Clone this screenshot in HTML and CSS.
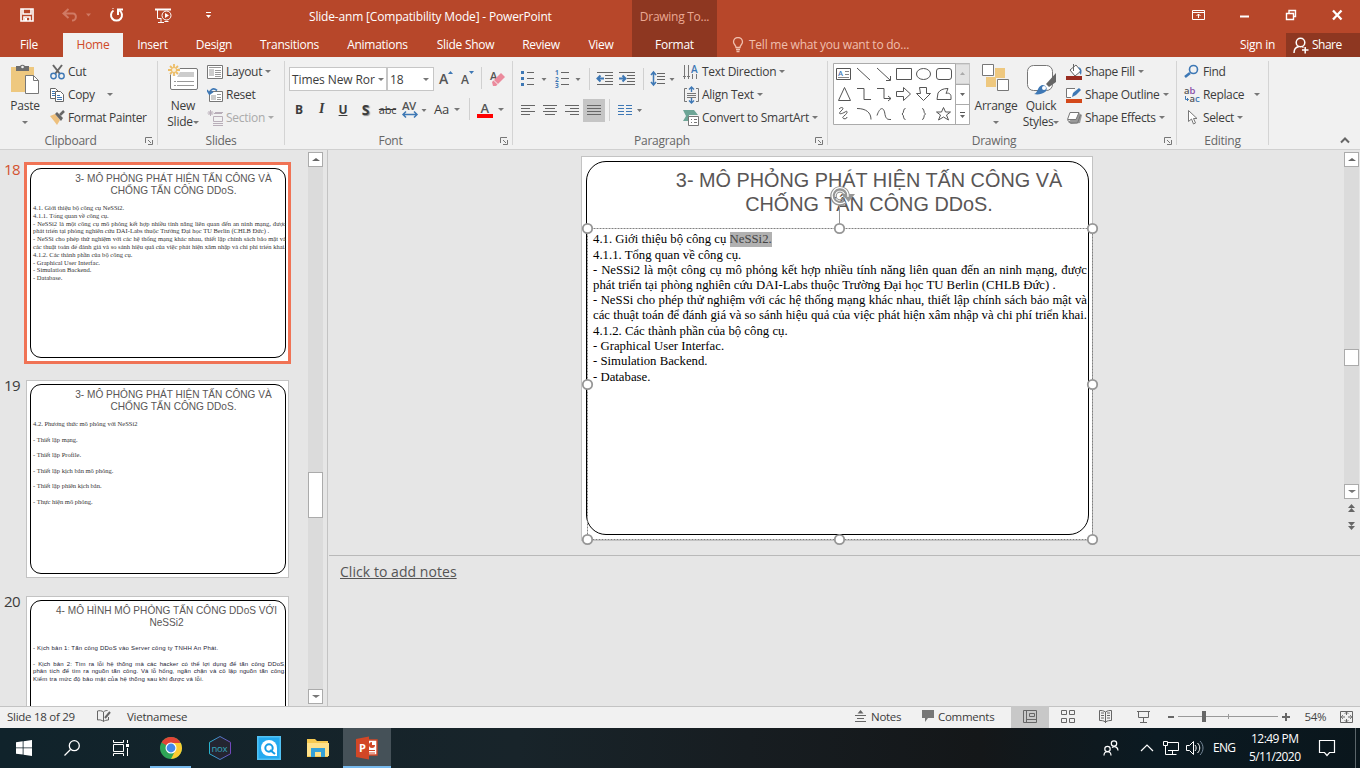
FILE: index.html
```html
<!DOCTYPE html>
<html lang="en">
<head>
<meta charset="utf-8">
<title>Slide-anm [Compatibility Mode] - PowerPoint</title>
<link rel="stylesheet" href="styles.css">
</head>
<body>
<div class="app">
  <header class="titlebar">
    <div class="quick">
      <svg width="230" height="33" viewBox="0 0 230 33" fill="none" stroke="#fff">
        <path d="M21 9h12v12H21zM23 9v5h8V9M24 21v-4h6v4" stroke-width="1.6"/><path d="M26 18v3" stroke-width="2"/>
        <g stroke="#d07a64" stroke-width="2"><path d="M64 13.500h9c4 0 4 7-1 7M68.500 9l-5 4.500 5 4.500"/></g><path d="M86 13.500h5l-2.500 3z" fill="#d07a64" stroke="none"/>
        <path d="M113.500 10.500a5.500 5.500 0 1 0 6 0M113 9v-.5M117 9.500h6M118 9v6" stroke-width="2"/>
        <path d="M155 9.500h16" stroke-width="2"/><path d="M157.500 10v8.500h4M158 22.500h6M161 19v3M164.500 21.500h4"/><circle cx="166.500" cy="15.500" r="4.500"/><path d="M165 13v5l4-2.500z" fill="#fff" stroke="none"/>
        <path d="M206 12.500h5"/><path d="M206 15h5l-2.500 3z" fill="#fff" stroke="none"/>
      </svg>
    </div>
    <div class="doc-title">Slide-anm [Compatibility Mode] - PowerPoint</div>
    <div class="ctx-title">Drawing To...</div>
    <div class="window-buttons">
      <svg width="180" height="33" viewBox="0 0 180 33" fill="none" stroke="#fff">
        <path d="M12.500 10.500h12v9h-12zM12 12.500h13M18.500 18v-4M16.500 16l2-2 2 2"/><path d="M60 16.500h9" stroke-width="2"/>
        <path d="M106.500 13.500h7v6h-7zM109 13v-2.500h6.500v6H114" stroke-width="1.400"/><path d="M153 10.500l8.500 9m0-9l-8.500 9" stroke-width="2.300"/>
      </svg>
    </div>
  </header>
  <nav class="tabs">
    <span class="tab file">File</span><span class="tab active">Home</span><span class="tab">Insert</span><span class="tab">Design</span><span class="tab">Transitions</span><span class="tab">Animations</span><span class="tab">Slide Show</span><span class="tab">Review</span><span class="tab">View</span><span class="tab ctx">Format</span>
    <span class="tell"><svg width="12" height="16" viewBox="0 0 12 16" fill="none" stroke="#f0bfae" stroke-width="1.300"><path d="M4 10.500C4 8 1.500 7.500 1.500 5a4.500 4.500 0 0 1 9 0C10.500 7.500 8 8 8 10.500zM4 12.500h4M4.500 14.500h3"/></svg>Tell me what you want to do...</span>
    <span class="signin">Sign in</span>
    <span class="share"><svg width="16" height="17" viewBox="0 0 16 17" fill="none" stroke="#fff" stroke-width="1.500"><circle cx="7.500" cy="5.500" r="4.300"/><path d="M1 16c0-3.500 2-6 5-6.500M9 9.500l1.500 1M9 13h6.500M12.200 10v6.500"/></svg>Share</span>
  </nav>

  <section class="ribbon">
    <div class="group clipboard">
      <div class="big">
        <svg width="30" height="32" viewBox="0 0 30 32"><path d="M1 4h23v25H1z" fill="#eec87f"/><path d="M6 3h4a3 3 0 0 1 5 0h4v5H6z" fill="#6d6d6d"/><circle cx="12.500" cy="4" r="1.300" fill="#f1f1f1"/><path d="M15.500 12.500h8l5 5v13h-13z" fill="#fff" stroke="#777"/><path d="M23.500 12.500v5h5" fill="none" stroke="#777"/></svg>
        <b>Paste</b><b><i class="dn"></i></b>
      </div>
      <div class="rows">
        <div><svg width="17" height="18" viewBox="0 0 17 18" fill="none"><path d="M4 2l7 9M13 2L6 11" stroke="#666" stroke-width="2"/><circle cx="4.500" cy="13" r="2.700" stroke="#3e78b5" stroke-width="1.400"/><circle cx="12.500" cy="13" r="2.700" stroke="#3e78b5" stroke-width="1.400"/></svg>Cut</div>
        <div><svg width="17" height="18" viewBox="0 0 17 18" fill="#fff" stroke="#666"><path d="M1.500 2.500h5l3 3v7h-8z"/><path d="M3 5.500h3M3 7.500h4M3 9.500h3" stroke="#3e78b5"/><path d="M6.500 5.500h5l3 3v7h-8z"/><path d="M8 9.500h3M8 11.500h5M8 13.500h5" stroke="#3e78b5"/></svg>Copy<i class="dn far"></i></div>
        <div><svg width="17" height="18" viewBox="0 0 17 18"><path d="M1 7l5-2 5 6-3 5-3-4z" fill="#eec07d"/><path d="M6 5l2-2 6 6-2 3z" fill="#666"/><path d="M11 6l4-4" stroke="#666" stroke-width="2.500"/></svg>Format Painter</div>
      </div>
      <footer>Clipboard</footer><svg class="launch" viewBox="0 0 8 8"><path d="M.5 6V.5H7M3 3l3 3M7.500 3v4.500H3" fill="none" stroke="#777"/></svg>
    </div>

    <div class="group slides">
      <div class="big">
        <svg width="32" height="32" viewBox="0 0 32 32"><rect x="3.500" y="5.500" width="27" height="21" rx="1.500" fill="#fff" stroke="#777"/><path d="M13 9h14v5H10z" fill="#ccc"/><path d="M7 18.500h20M7 22.500h20" stroke="#999" stroke-dasharray="2 1 17 0"/><path d="M7 1v12M1 7h12M3 3l8 8M11 3l-8 8" stroke="#f1f1f1" stroke-width="3.500"/><path d="M7 1v12M1 7h12M3 3l8 8M11 3l-8 8" stroke="#edbd66" stroke-width="1.800"/><circle cx="7" cy="7" r="2" fill="#f8efdc"/></svg>
        <b>New</b><b>Slide<i class="dn"></i></b>
      </div>
      <div class="rows">
        <div><svg width="17" height="18" viewBox="0 0 17 18"><path d="M.5 2.500h15v13H.5z" fill="#fff" stroke="#777"/><path d="M2 4.500h12M8 7.500h6M8 9.500h6M8 11.500h6M8 13.500h6" stroke="#999"/><path d="M2 6h5v7H2z" fill="#ccc"/></svg>Layout<i class="dn"></i></div>
        <div><svg width="17" height="18" viewBox="0 0 17 18"><path d="M2.500 5.500h13v10h-13z" fill="#fff" stroke="#777"/><path d="M4 9h5v5H4z" fill="#ccc"/><path d="M10 8.500h4M10 11.500h4M10 13.500h4" stroke="#999"/><path d="M10 4.500C6 1 3 4 2.500 7.500M0 4l2.500 4L6 5.500" fill="none" stroke="#3e78b5" stroke-width="1.700"/></svg>Reset</div>
        <div class="off"><svg width="17" height="18" viewBox="0 0 17 18" fill="none" stroke="#b9aeb9"><path d="M3.500 1v6M.5 4h6M1.500 2l4 4M5.500 2l-4 4M7 4.500h8M6.500 7.500h9v5h-9zM6 14.500h10" /><path d="M8 3.500h8M6 16.500h10"/></svg>Section<i class="dn"></i></div>
      </div>
      <footer>Slides</footer>
    </div>

    <div class="group font">
      <div class="tools">
        <div class="r1">
          <div class="combo">Times New Ror<i class="dn"></i></div><div class="combo">18<i class="dn"></i></div>
          <svg width="22" height="24" viewBox="0 0 22 24"><text x="4" y="17" class="ga" font-size="14">A</text><path d="M13 7l2.500-3L18 7z" fill="#3e78b5"/></svg>
          <svg width="22" height="24" viewBox="0 0 22 24"><text x="4" y="17" class="ga" font-size="12">A</text><path d="M12 4h5l-2.500 3z" fill="#3e78b5"/></svg>
          <i class="sep"></i>
          <svg width="24" height="24" viewBox="0 0 24 24"><text x="6" y="13" class="ga" font-size="11">A</text><path d="M10 13l7-7 4 4-7 7z" fill="#eb8a9c"/><path d="M8 15l1.500-1.500 4 4L12 19H9z" fill="#eb8a9c"/></svg>
        </div>
        <div class="r2">
          <b class="g">B</b><em class="g">I</em><b class="g un">U</b><b class="g sh">S</b><span class="g strike">abc</span>
          <svg width="32" height="24" viewBox="0 0 32 24"><text x="4" y="12" class="ga" font-size="11.500" letter-spacing="-.5">AV</text><path d="M5 16.500h14M8 13.500l-3 3 3 3M16 13.500l3 3-3 3" fill="none" stroke="#3e78b5" stroke-width="1.500"/><path d="M23.500 11h5L26 14z" fill="#777"/></svg>
          <span class="g aa">Aa<i class="dn"></i></span><i class="sep"></i>
          <svg width="21" height="24" viewBox="0 0 21 24"><text x="6.500" y="15" class="ga" font-size="13">A</text><path d="M3 16h16v4H3z" fill="red"/></svg><span class="g last"><i class="dn"></i></span>
        </div>
      </div>
      <footer>Font</footer><svg class="launch" viewBox="0 0 8 8"><path d="M.5 6V.5H7M3 3l3 3M7.500 3v4.500H3" fill="none" stroke="#777"/></svg>
    </div>

    <div class="group para">
      <div class="tools">
        <svg width="166" height="62" viewBox="517 61 166 62" fill="none" stroke="#666" shape-rendering="crispEdges">
          <path d="M527 72.500h7M527 78.500h7M527 84.500h7M561 72.500h8M561 78.500h8M561 84.500h8"/>
          <g fill="#3e78b5" stroke="none"><rect x="521" y="71" width="3" height="3"/><rect x="521" y="77" width="3" height="3"/><rect x="521" y="83" width="3" height="3"/></g>
          <g fill="#3e78b5" stroke="none" font-size="6.500" font-weight="700" font-family="Noto Sans"><text x="555" y="75">1</text><text x="555" y="81.500">2</text><text x="555" y="88">3</text></g>
          <path d="M589.500 68v22M643.500 68v22M609.500 99v22" stroke="#d0d0d0"/>
          <path d="M597 72.500h16M605 75.500h8M605 78.500h8M605 81.500h8M597 84.500h16M619 72.500h16M627 75.500h8M627 78.500h8M627 81.500h8M619 84.500h16"/>
          <g stroke="#3e78b5" stroke-width="2" shape-rendering="auto"><path d="M598 78.500h6M600.500 75.500l-3 3 3 3M619 78.500h6M622.500 75.500l3 3-3 3"/><path d="M653.500 72v13M651 75l2.500-3 2.500 3M651 82l2.500 3 2.500-3" stroke-width="1.500"/></g>
          <path d="M657 73.500h8M657 76.500h8M657 79.500h8M657 83.500h8"/>
          <rect x="583" y="99" width="22" height="23" fill="#c5c5c5" stroke="none"/>
          <path d="M521 105.500h14M521 108.500h9M521 111.500h14M521 114.500h9M543 105.500h14M545 108.500h10M543 111.500h14M545 114.500h10M565 105.500h14M570 108.500h9M565 111.500h14M570 114.500h9M587 105.500h14M587 108.500h14M587 111.500h14M587 114.500h14"/>
          <path d="M618 105.500h6M618 108.500h6M618 111.500h6M618 114.500h6M626 105.500h6M626 108.500h6M626 111.500h6M626 114.500h6" stroke="#3e78b5"/>
          <g fill="#777" stroke="none" shape-rendering="auto"><path d="M541.500 78h5l-2.500 3zM575.500 78h5l-2.500 3zM669.500 78h5l-2.500 3zM637 109h5l-2.500 3z"/></g>
        </svg>
      </div>
      <div class="rows">
        <div><svg width="19" height="18" viewBox="0 0 19 18"><path d="M1.500 2v14M5.500 2v14M9.500 11v5M13.500 11v5M0 13.500h3M4 13.500h3" stroke="#777" fill="none"/><text x="8" y="10" font-size="10" class="ga blue">A</text></svg>Text Direction<i class="dn"></i></div>
        <div><svg width="19" height="18" viewBox="0 0 19 18" fill="none" stroke="#777"><path d="M4 2.500H1.500v13H4M13 2.500h2.500v13H13M4 7.500h9M4 9.500h9M4 11.500h9"/><path d="M8.500 1v5M6 3.500L8.500 1 11 3.500M8.500 17v-5M6 14.500L8.500 17l2.500-2.500" stroke="#3e78b5" stroke-width="1.400"/></svg>Align Text<i class="dn"></i></div>
        <div><svg width="19" height="18" viewBox="0 0 19 18"><path d="M0 1h11l4 5H6v6H0l3-5z" fill="#6da596"/><path d="M5.500 7.500h10v9h-10z" fill="#fff" stroke="#777"/><path d="M8 10.500h1M11 10.500h3M8 13.500h1M11 13.500h3" stroke="#777"/></svg>Convert to SmartArt<i class="dn"></i></div>
      </div>
      <footer>Paragraph</footer><svg class="launch" viewBox="0 0 8 8"><path d="M.5 6V.5H7M3 3l3 3M7.500 3v4.500H3" fill="none" stroke="#777"/></svg>
    </div>

    <div class="group drawing">
      <svg class="gallery" width="138" height="63" viewBox="833 63 138 63" fill="none" stroke="#555">
        <path d="M833.500 63.500h136v61h-136z" fill="#fff" stroke="#ababab"/><path d="M955.500 64h14v20h-14z" fill="#e3e3e3" stroke="#c6c6c6"/><path d="M955.500 64v60M955.500 84.500h14M955.500 104.500h14" stroke="#ababab"/>
        <path d="M960 75h5l-2.500-3z" fill="#aaa" stroke="none"/><path d="M960 93h5l-2.500 3zM960 115h5l-2.500 3z" fill="#666" stroke="none"/><path d="M960 112.500h5"/>
        <path d="M836.500 68.500h14v11h-14z"/><path d="M845 71.500h4M845 74.500h4M838 77.500h11" stroke="#888"/><text x="838" y="76" font-size="7.500" class="ga blue">A</text>
        <path d="M857 68l13 12M877 68l13 12M890.500 76v4.500H886M896.500 68.500h15v11h-15z"/><ellipse cx="923.500" cy="74" rx="7" ry="5.500"/><rect x="936.500" y="68.500" width="15" height="11" rx="2.500"/>
        <path d="M844.500 87.500l6 13h-12zM857 88.500h7v11h7M877 88.500h7v10h7M888 96l3 2.500-3 2.500M896.500 91.500h7v-4l7 6.500-7 6.500v-4h-7zM919.500 87.500h7v6h4l-7 7-7-7h4zM938 93c2-3 5-4.500 10-4.500l-2 5c2-1 5 0 5 3v3h-14z"/>
        <path d="M839 109c3-3 6-1 2 2-4 4 1 3 4 1s3 1-1 4 3 4 3 1M857 108.500c9 0 14 4 14 11M877 115.500c3-9 7-9 8-1 1 5 3 5 6 5M905.500 108.500c-3 0-1 4.500-3.500 5.500 2.500 1 .5 5.500 3.500 5.500M922 108.500c3 0 1 4.500 3.500 5.500-2.500 1-.5 5.500-3.500 5.500M943.500 107.500l2 4.500h5l-4 3 2 5-5-3-5 3 2-5-4-3h5z"/>
      </svg>
      <div class="big arrange"><svg width="28" height="32" viewBox="0 0 28 32"><path d="M13 5h10v10H13zM4 14h10v10H4z" fill="#eec87f"/><path d="M.500 1.500h11v11H.500zM15.500 16.500h11v11h-11z" fill="#fff" stroke="#777"/></svg><b>Arrange</b><b><i class="dn"></i></b></div>
      <div class="big quickst"><svg width="32" height="32" viewBox="0 0 32 32"><rect x="2.500" y="2.500" width="25" height="25" rx="6" fill="#fff" stroke="#777"/><path d="M9 31c4-1 3-7 8-9 5 0 6 5 3 7s-7 3-11 2z" fill="#3e78b5"/><circle cx="19" cy="25" r="2" fill="#fff"/><path d="M21 21l10-11v9l-7 5z" fill="#666"/></svg><b>Quick</b><b>Styles<i class="dn"></i></b></div>
      <div class="rows">
        <div><svg width="17" height="18" viewBox="0 0 17 18"><path d="M4 7l6-5 5 6-6 5z" fill="#fff" stroke="#666"/><path d="M7.500 1v7" stroke="#666"/><path d="M12 4c4 1 4 4 3 8-1-1-2-3-1-5z" fill="#3e78b5"/><path d="M0 13h16v4H0z" fill="#992c20"/></svg>Shape Fill<i class="dn"></i></div>
        <div><svg width="17" height="18" viewBox="0 0 17 18"><path d="M9 2.500H.500v9H5" fill="#fff" stroke="#777"/><path d="M6 11l1-4 6-5 2 2-5 5z" fill="#3e78b5"/><path d="M0 13h16v4H0z" fill="#d4491b"/></svg>Shape Outline<i class="dn"></i></div>
        <div><svg width="17" height="18" viewBox="0 0 17 18"><path d="M2 13l3 2 9-1 2-8-3-2z" fill="#999"/><path d="M4 3.500h9l-3 7H1.500z" fill="#fff" stroke="#777"/><path d="M1.500 11l3 3h7l3-8" fill="none" stroke="#777"/></svg>Shape Effects<i class="dn"></i></div>
      </div>
      <footer>Drawing</footer><svg class="launch" viewBox="0 0 8 8"><path d="M.5 6V.5H7M3 3l3 3M7.500 3v4.500H3" fill="none" stroke="#777"/></svg>
    </div>

    <div class="group editing">
      <div class="rows">
        <div><svg width="17" height="18" viewBox="0 0 17 18" fill="none" stroke="#3e78b5"><circle cx="9.500" cy="6.500" r="4" stroke-width="1.600"/><path d="M6 10l-5 4" stroke-width="2.600"/></svg>Find</div>
        <div><svg class="abac" width="17" height="20" viewBox="0 0 17 20"><text y="9" class="ga" font-size="9.500"><tspan x="0">a</tspan><tspan fill="#8a4fa8">b</tspan><tspan x="5.500" y="17">a</tspan><tspan class="blue">c</tspan></text><path d="M1.500 11v3.500h3M3 13l1.500 1.500L3 16" fill="none" stroke="#3e78b5"/></svg>Replace<i class="dn far"></i></div>
        <div><svg width="17" height="18" viewBox="0 0 17 18"><path d="M4.500 1.500v11l3-2.500 2 5 2-1-2-4.500h3.500z" fill="#fff" stroke="#777"/></svg>Select<i class="dn"></i></div>
      </div>
      <footer>Editing</footer>
    </div>
    <svg class="collapse" width="10" height="7" viewBox="0 0 10 7"><path d="M1 5.500l4-4 4 4" fill="none" stroke="#666" stroke-width="2"/></svg>
  </section>

  <main class="work">
    <aside class="thumbs">
      <div class="list">
        <div class="item sel"><span>18</span>
          <div class="slide"><div class="page"></div>
            <h2>3- MÔ PHỎNG PHÁT HIỆN TẤN CÔNG VÀ<br>CHỐNG TẤN CÔNG DDoS.</h2>
            <div class="text"><p>4.1. Giới thiệu bộ công cụ NeSSi2.</p><p>4.1.1. Tổng quan về công cụ.</p><p class="j">- NeSSi2 là một công cụ mô phỏng kết hợp nhiều tính năng liên quan đến an ninh mạng, được</p><p>phát triển tại phòng nghiên cứu DAI-Labs thuộc Trường Đại học TU Berlin (CHLB Đức) .</p><p class="j">- NeSSi cho phép thử nghiệm với các hệ thống mạng khác nhau, thiết lập chính sách bảo mật và</p><p class="j">các thuật toán để đánh giá và so sánh hiệu quả của việc phát hiện xâm nhập và chi phí triển khai.</p><p>4.1.2. Các thành phần của bộ công cụ.</p><p>- Graphical User Interfac.</p><p>- Simulation Backend.</p><p>- Database.</p></div>
          </div></div>
        <div class="item"><span>19</span>
          <div class="slide"><div class="page"></div>
            <h2>3- MÔ PHỎNG PHÁT HIỆN TẤN CÔNG VÀ<br>CHỐNG TẤN CÔNG DDoS.</h2>
            <div class="text spaced"><p>4.2. Phương thức mô phỏng với NeSSi2</p><p>- Thiết lập mạng.</p><p>- Thiết lập Profile.</p><p>- Thiết lập kịch bản mô phỏng.</p><p>- Thiết lập phiên kịch bản.</p><p>- Thực hiện mô phỏng.</p></div>
          </div></div>
        <div class="item"><span>20</span>
          <div class="slide s20"><div class="page"></div>
            <h2>4- MÔ HÌNH MÔ PHỎNG TẤN CÔNG DDoS VỚI<br>NeSSi2</h2>
            <div class="text sans"><p class="first">- Kịch bản 1: Tấn công DDoS vào Server công ty TNHH An Phát.</p><p class="j">- Kịch bản 2: Tìm ra lỗi hệ thống mà các hacker có thể lợi dụng để tấn công DDoS,</p><p class="j">phân tích để tìm ra nguồn tấn công. Vá lỗ hổng, ngăn chặn và cô lập nguồn tấn công.</p><p>Kiểm tra mức độ bảo mật của hệ thống sau khi được vá lỗi.</p></div>
          </div></div>
      </div>
      <div class="bar left"><span class="btn"><i class="up"></i></span><span class="knob"></span><span class="btn end"><i class="dn"></i></span></div>
    </aside>
    <section class="editor">
      <div class="canvas">
        <div class="slide main"><div class="page"></div>
          <h2>3- MÔ PHỎNG PHÁT HIỆN TẤN CÔNG VÀ<br>CHỐNG TẤN CÔNG DDoS.</h2>
          <div class="text"><p class="a">4.1. Giới thiệu bộ công cụ <mark>NeSSi2.</mark></p><p>4.1.1. Tổng quan về công cụ.</p><p class="c j">- NeSSi2 là một công cụ mô phỏng kết hợp nhiều tính năng liên quan đến an ninh mạng, được</p><p>phát triển tại phòng nghiên cứu DAI-Labs thuộc Trường Đại học TU Berlin (CHLB Đức) .</p><p class="j">- NeSSi cho phép thử nghiệm với các hệ thống mạng khác nhau, thiết lập chính sách bảo mật và</p><p class="j">các thuật toán để đánh giá và so sánh hiệu quả của việc phát hiện xâm nhập và chi phí triển khai.</p><p>4.1.2. Các thành phần của bộ công cụ.</p><p>- Graphical User Interfac.</p><p>- Simulation Backend.</p><p>- Database.</p></div>
          <svg class="handles" width="524" height="370" viewBox="580 180 524 370" fill="#fff" stroke="#969696" stroke-width="1.800">
            <path d="M587.500 228.500h505v311h-505z" fill="none" stroke="#808080" stroke-width="1" stroke-dasharray="2 1"/><path d="M839.500 206v18" stroke-width="1"/>
            <circle cx="587.500" cy="228.500" r="4.700"/><circle cx="839.500" cy="228.500" r="4.700"/><circle cx="1092.500" cy="228.500" r="4.700"/><circle cx="587.500" cy="384.500" r="4.700"/><circle cx="1092.500" cy="384.500" r="4.700"/><circle cx="587.500" cy="539.500" r="4.700"/><circle cx="839.500" cy="539.500" r="4.700"/><circle cx="1092.500" cy="539.500" r="4.700"/>
            <g fill="none"><path d="M847.500 196a7.500 7.500 0 1 0-2.500 5.500" stroke-width="4.500"/><path d="M842 194h13l-6.500 8z" fill="#969696" stroke="none"/><path d="M848 197a8 8 0 1 0-3 5" stroke="#fff" stroke-width="1.200"/><circle cx="840" cy="196" r="3.800" stroke-width="1.200"/></g>
          </svg>
        </div>
        <div class="bar right"><span class="btn"><i class="up"></i></span><span class="knob"></span><span class="btn end"><i class="dn"></i></span>
          <svg class="pager" width="15" height="36" viewBox="0 0 15 36" fill="#666"><path d="M7.500 4L11 8H4zM7.500 8l3.500 4H4zM4 22h7l-3.500 4zM4 26h7l-3.500 4z"/></svg></div>
      </div>
      <div class="notes"><u>Click to add notes</u></div>
    </section>
  </main>

  <div class="status">
    <span>Slide 18 of 29</span>
    <svg width="16" height="14" viewBox="0 0 16 14" fill="none" stroke="#666"><path d="M7.500 3C6 1.500 3 1.500 1.500 2v9c2-.5 4.500 0 6 1.500V3c1-1 2-1.500 4-1.500M7.500 12.500c1-1 3-1.500 5-1.500V8"/><path d="M9 9l5-6" stroke-width="2"/></svg>
    <span>Vietnamese</span>
    <svg width="14" height="14" viewBox="0 0 14 14" stroke="#666"><path d="M1 6.500h11M3 9.500h7M1 12.500h11"/><path d="M3.500 4.500h6l-3-3.500z" fill="#666" stroke="none"/></svg><span>Notes</span>
    <svg width="12" height="14" viewBox="0 0 12 14"><path d="M0 1h12v8H6l-3 4V9H0z" fill="#777"/></svg><span>Comments</span>
    <svg class="views" width="349" height="22" viewBox="1011 706 349 22" fill="none" stroke="#666">
      <path d="M1011 706h38v22h-38z" fill="#c8c8c8" stroke="none"/><path d="M1023.500 710.500h13v12h-13zM1026.500 710.500v12M1029.500 713.500h5v3h-5zM1027 719.500h10"/>
      <path d="M1061.500 710.500h5v4h-5zM1069.500 710.500h5v4h-5zM1061.500 718.500h5v4h-5zM1069.500 718.500h5v4h-5z"/>
      <path d="M1105.500 712c-2-1.500-4-1.500-6-1.500v10c2 0 4 0 6 1.500 2-1.500 4-1.500 6-1.500v-10c-2 0-4 0-6 1.500v11M1101 713h3M1101 715.500h3M1101 718h3M1107 713h3M1107 715.500h3M1107 718h3"/>
      <path d="M1137 711.500h13M1138.500 712v5.500h10V712M1143.500 718v4M1140 722.500h7"/>
      <path d="M1168 717h6M1282 717h8M1286 713v8" stroke-width="2"/><path d="M1178 716.500h100M1228.500 714v5" stroke="#999"/><path d="M1202 711h4v11h-4z" fill="#666" stroke="none"/>
      <text x="1304.500" y="721" class="pct">54%</text>
      <path d="M1340.500 711.500h12v11h-12zM1346.500 712v3M1346.500 719v3M1342 717h3M1348 717h3"/><path d="M1344.500 714l2-2 2 2M1344.500 720l2 2 2-2M1343 715l-2 2 2 2M1350 715l2 2-2 2" stroke-width=".8"/>
    </svg>
  </div>

  <div class="taskbar">
    <span><svg width="16" height="16" viewBox="0 0 16 16" fill="#fff"><path d="M0 2.200L6.700 1.300v6.200H0zM7.500 1.200L16 0v7.500H7.500zM0 8.300h6.700v6.300L0 13.700zM7.500 8.300H16V16l-8.500-1.200z"/></svg></span>
    <span><svg width="16" height="16" viewBox="0 0 16 16" fill="none" stroke="#fff" stroke-width="1.300"><circle cx="10.300" cy="5.700" r="5"/><path d="M6.500 9.500L.5 15.500"/></svg></span>
    <span><svg width="17" height="16" viewBox="0 0 17 16" fill="none" stroke="#fff"><path d="M.5 0v2.500h10V0M.5 4.500h10v7H.5zM.5 16v-2.500h10V16M14.500 0v3M14.500 8v8"/><path d="M13 5.500h3" stroke-width="3"/></svg></span>
    <span class="run"><svg width="24" height="24" viewBox="-12 -12 24 24"><circle r="11" fill="#2fa557"/><path d="M0 0L-9.500-5.500A11 11 0 0 1 9.500-5.500z" fill="#e34436"/><path d="M0-5H9.800A11 11 0 0 1 0 11L5 1z" fill="#fbcb32"/><circle r="5.500" fill="#fff"/><circle r="4.400" fill="#4388ec"/></svg></span>
    <span><svg width="24" height="26" viewBox="0 0 24 26"><defs><linearGradient id="nx" x2="1"><stop stop-color="#28b4cf"/><stop offset="1" stop-color="#7248bc"/></linearGradient></defs><path d="M12 1.500l10.500 5.800v11.500L12 24.500 1.500 18.800V7.300z" fill="#242531" stroke="url(#nx)"/><text x="3.500" y="16.500" fill="#35a8be" font-family="Open Sans" font-size="9.500">nox</text></svg></span>
    <span><svg width="24" height="24" viewBox="0 0 24 24"><path d="M0 0h24v24H0z" fill="#52c2f4"/><path d="M1.500 1.500h21v21h-21z" fill="#24aaf0"/><path d="M4 12a8 8 0 1 1 16 0v8h-8a8 8 0 0 1-8-8z" fill="#fff"/><circle cx="12" cy="12" r="3.700" fill="none" stroke="#159ce5" stroke-width="2"/><path d="M13 14l5 4" stroke="#159ce5" stroke-width="2"/></svg></span>
    <span><svg width="22" height="20" viewBox="0 0 22 20"><path d="M0 1h8l2 2h11v16H0z" fill="#f6c951"/><path d="M0 5h22v13H0z" fill="#ffe18a"/><path d="M4 19v-9h14v9h-4v-5H8v5z" fill="#35a1d8"/></svg></span>
    <span class="run cur"><svg width="24" height="24" viewBox="0 0 24 24"><path d="M13 4h9v15h-9z" fill="#fff" stroke="#d24726" stroke-width="1.400"/><path d="M14 14.500h6M14 17h6" stroke="#d24726"/><circle cx="17" cy="9" r="3" fill="#d24726"/><path d="M17 5v4h4V5z" fill="#fff"/><path d="M1 3l13-2.500v23L1 21z" fill="#d24726"/><text x="4" y="16" fill="#fff" font-family="Open Sans" font-weight="700" font-size="11">P</text></svg></span>
    <svg class="tray" width="260" height="40" viewBox="1100 728 260 40" fill="none" stroke="#fff">
      <g stroke-width="1.200"><circle cx="1107.500" cy="749" r="2.700"/><path d="M1104 755.500c0-5 7-5 7 0"/><circle cx="1114" cy="743.500" r="2.700"/><path d="M1112 747.500c3-2 6 0 6 3"/><path d="M1141 751l6-6 6 6"/></g>
      <path d="M1167 742.500h11.500v8H1168M1163.500 741.500h4v4h-4zM1165.500 746v8.500h11M1172.500 751v3"/>
      <path d="M1186.500 745.500h3l4-4v13l-4-4h-3zM1195 745c1.500 1.500 1.500 4.500 0 6M1197.500 743c3 3 3 7 0 10"/><path d="M1200 741c4 4 4 10 0 14" stroke="#789"/>
      <path d="M1319.500 740.500h15v12h-5l-2.500 3-2.500-3h-5z" stroke-width="1.200"/><path d="M1355.500 728v40" stroke="#5b656a"/>
      <g fill="#fff" stroke="none" class="clock"><text x="1213" y="752" textLength="23">ENG</text><text x="1251" y="743" textLength="48">12:49 PM</text><text x="1249" y="761" textLength="52">5/11/2020</text></g>
    </svg>
  </div>
</div>
</body>
</html>
```
FILE: styles.css
```css
* { box-sizing: border-box; }
body { margin: 0; font: 12px "Open Sans", "Noto Sans", sans-serif; letter-spacing: -.27px; color: #3c3c3c; background: #e6e6e6; overflow: hidden; }
svg { display: block; flex: none; }
.app { width: 1360px; height: 768px; display: flex; flex-direction: column; overflow: hidden; }

.titlebar { height: 33px; display: grid; grid-template-columns: 230px 402px 85px 463px 180px; background: #b7472a; color: #fff; line-height: 33px; }
.doc-title { padding-left: 79px; white-space: nowrap; letter-spacing: -.18px; }
.ctx-title { background: #8e3721; color: #eba893; text-align: center; }
.window-buttons { grid-column: 5; }
.tabs { height: 24px; display: grid; grid-template-columns: 63px 60px 59px 64px 87px 89px 87px 64px 59px 85px 515px 54px 74px; background: #b7472a; color: #fff; line-height: 24px; white-space: nowrap; }
.tab { text-align: center; }
.tab.file { padding-right: 5px; }
.tab:nth-child(9) { padding-right: 3px; }
.tab.active { background: #f1f1f1; color: #d04a27; }
.tab.ctx { background: #8e3721; }
.tell { display: flex; align-items: center; gap: 5px; padding-left: 15px; color: #f0bfae; letter-spacing: -.24px; }
.signin { padding-left: 8px; }
.share { background: #8e3721; display: flex; align-items: center; gap: 3px; padding-left: 7px; letter-spacing: -.5px; }

.ribbon { height: 93px; display: flex; background: #f1f1f1; border-bottom: 1px solid #d0d0d0; position: relative; }
.group { position: relative; display: flex; height: 92px; padding-top: 4px; white-space: nowrap; }
.group::after { content: ""; position: absolute; right: 0; top: 4px; width: 1px; height: 84px; background: #d4d4d4; }
.group footer { position: absolute; left: 0; right: 17px; bottom: 0; text-align: center; color: #666; line-height: 17px; }
.clipboard { width: 158px; } .slides { width: 127px; } .font { width: 228px; } .para { width: 315px; } .drawing { width: 349px; } .editing { width: 92px; }
.slides footer { right: 1px; }
.editing footer { right: 1px; }
.launch { position: absolute; right: 5px; bottom: 4px; width: 8px; height: 8px; }
.collapse { position: absolute; right: 10px; bottom: 5px; }
.dn, .up { display: inline-block; width: 0; height: 0; border: 3px solid transparent; border-top-color: #777; border-bottom: 0; margin-left: 3px; flex: none; }
.up { border-top: 0; border-bottom: 3px solid #666; }
.dn.far { margin-left: 10px; }
.off { color: #aaa; }
.off .dn { border-top-color: #aaa; }
.big { display: flex; flex-direction: column; align-items: center; width: 44px; padding-top: 2px; }
.big svg { margin-bottom: 3px; }
.big b { font-weight: 400; line-height: 16px; height: 16px; display: flex; align-items: center; }
.big b .dn:only-child { margin: 0; }
.big .dn { margin-left: 2px; }
.clipboard .big { margin-left: 3px; margin-right: 2px; }
.clipboard .rows { letter-spacing: -.36px; }
.slides .big { margin-left: 3px; margin-right: 2px; }
.rows { margin-top: -1px; }
.rows > div { display: flex; align-items: center; height: 23px; }
.rows svg { margin-right: 2px; }
.clipboard .far { margin-left: 12px; }

.font .tools { padding-left: 4px; padding-top: 6px; }
.r1 { display: grid; grid-template-columns: 98px 48px 22px 22px 5px 24px; height: 24px; }
.r2 { display: grid; grid-template-columns: 20px 23px 22px 23px 21px 32px 34px 10px 21px 12px; height: 24px; margin-top: 7px; }
.combo { background: #fff; border: 1px solid #c6c6c6; height: 24px; display: flex; align-items: center; justify-content: space-between; padding: 0 4px 0 2px; letter-spacing: -.1px; }
.combo + .combo { margin-right: 1px; }
.ga { font-family: "Open Sans"; font-weight: 600; fill: #555; stroke: none; }
.blue { fill: #3e78b5; }
.sep { width: 1px; height: 22px; background: #d0d0d0; margin-left: 2px; }
.r2 .sep { margin-left: 5px; }
.g { display: flex; align-items: center; justify-content: center; height: 22px; }
.g .dn { margin-left: 5px; }
.last { justify-content: flex-start; }
.last .dn { margin-left: 3px; }
em.g { font-family: "Liberation Serif"; font-size: 14px; font-weight: 700; padding-left: 2px; }
.un { text-decoration: underline; }
.sh { font-size: 14px; text-shadow: 1px 1px 1px #888; }
.strike { text-decoration: line-through; font-size: 11px; }
.aa { font-size: 13px; }
.para .tools { width: 170px; padding-left: 4px; }
.para .rows svg { margin-right: 0; }
.gallery { margin: 2px 0 0 5px; }
.arrange { margin-left: 2px; width: 46px; }
.arrange svg { margin-left: 0; }
.quickst { margin-left: 1px; width: 42px; }
.drawing .rows { margin-left: 4px; letter-spacing: -.34px; }
.editing .rows { margin-left: 7px; letter-spacing: -.36px; }
.abac { overflow: visible; letter-spacing: 0; }

.work { height: 556px; display: flex; }
.thumbs { width: 328px; display: flex; border-right: 1px solid #c3c3c3; overflow: hidden; }
.list { width: 308px; padding-top: 14px; }
.item { height: 216px; display: flex; }
.item > span { width: 26px; font-size: 15px; line-height: 10px; padding-left: 4px; letter-spacing: -.5px; flex: none; }
.item.sel > span { color: #d35230; }
.slide { position: relative; width: 263px; height: 198px; background: #fff; border: 1px solid #c3c3c3; font-size: 10.100px; letter-spacing: 0; white-space: nowrap; }
.sel .slide { border-color: #fff; outline: 3px solid #f07355; outline-offset: -1px; }
.page { position: absolute; left: 3px; top: 3px; right: 2px; bottom: 3px; border: 1px solid #000; border-radius: 11px; }
.slide h2 { margin: 0; position: relative; padding: 8px 0 0 32px; font: 1em/12px "Liberation Sans"; color: #595656; text-align: center; }
.s20 h2 { padding-left: 18px; }
.text { position: relative; padding: 7px 0 0 6px; width: 259px; font-family: "Liberation Serif"; font-size: 6.520px; line-height: 7.800px; color: #333; }
.text p { margin: 0; }
.text .j { text-align-last: justify; }
.spaced { line-height: 15.600px; padding-top: 3px; }
.sans { font-family: "Liberation Sans"; font-size: 6px; letter-spacing: .22px; color: #223; padding-top: 16px; }
.sans .j { letter-spacing: .1px; }
.sans .first { margin-bottom: 7.800px; }

.bar { width: 15px; background: #dbdbdb; display: flex; flex-direction: column; position: relative; }
.btn { height: 15px; background: #fff; border: 1px solid #ababab; display: grid; place-items: center; }
.btn i { margin: 0; border-left-width: 4px; border-right-width: 4px; }
.knob { background: #fff; border: 1px solid #ababab; }
.left { margin-top: 2px; height: 552px; }
.left .knob { height: 46px; margin-top: 305px; }
.btn.end { margin-top: auto; }
.editor { flex: 1; display: flex; flex-direction: column; margin-left: 1px; }
.canvas { height: 406px; display: flex; justify-content: space-between; border-bottom: 1px solid #b9b9b9; padding-left: 252px; }
.main { width: 512px; height: 385px; margin-top: 6px; font-size: 19.850px; }
.main .page { left: 4px; top: 4px; right: 3px; bottom: 5px; border-radius: 20px; }
.main h2 { padding: 11px 0 0 64px; line-height: 24px; }
.main .text { width: 505px; padding: 14px 0 0 11px; font-size: 12.780px; line-height: 15.300px; color: #000; }
.main .text .a { line-height: 18px; }
.main .text .c { line-height: 14.500px; }
mark { background: #b1b1b1; color: #444; display: inline-block; line-height: 15px; }
.handles { position: absolute; left: -2px; top: 23px; }
.right { margin: 2px 1px 0 0; height: 347px; }
.right .knob { height: 17px; margin-top: 182px; }
.pager { position: absolute; top: 348px; left: 0; }
.notes { padding: 6px 0 0 11px; font-size: 14px; line-height: 20px; color: #555; letter-spacing: .05px; }

.status { height: 22px; background: #f1f1f1; border-top: 1px solid #c3c3c3; display: grid; grid-template-columns: 89px 31px 727px 17px 51px 16px 73px 349px; align-items: center; padding-left: 7px; white-space: nowrap; font-size: 11.500px; }
.status > * { margin-top: -3px; }
.status .views { margin-top: -1px; }
.pct { fill: #444; stroke: none; font-size: 11.500px; }
.taskbar { height: 40px; display: grid; grid-template-columns: 48px 48px 50px 49px 49px 49px 50px 48px 709px 260px; background: linear-gradient(90deg, #10232b, #18242a 38%, #171d21 55%, #141719 72%, #0b1a22 85%, #0a161c); }
.taskbar span { display: grid; place-items: center; }
.run { box-shadow: inset 0 -2px #76b9ed; margin: 0 4px; }
.cur { background: #455158; margin: 0; }
.tray { grid-column: 10; }
.clock { font-size: 12px; letter-spacing: 0; }
```
